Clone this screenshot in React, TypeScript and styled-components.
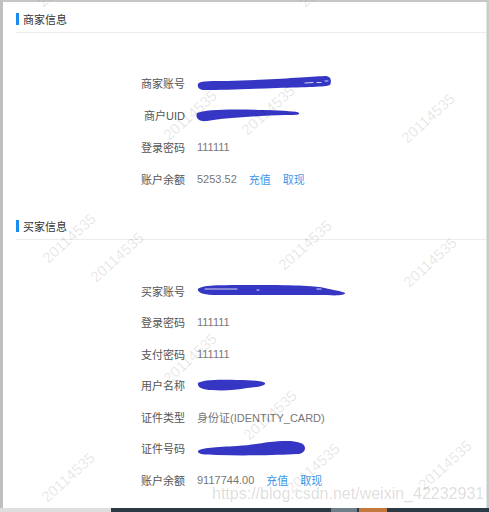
import React from "react";
import styled, { createGlobalStyle } from "styled-components";

const Global = createGlobalStyle`
  html, body { margin: 0; padding: 0; background: #fff; }
  body { font-family: "Liberation Sans", "Noto Sans CJK SC", sans-serif; }
`;

const Screen = styled.div`
  position: relative;
  width: 489px;
  height: 512px;
  overflow: hidden;
  display: flex;
  flex-direction: column;
  background: #c9c9c9;
`;

const Window = styled.div`
  flex: 1;
  min-height: 0;
  display: flex;
  background: #fff;
  border-top: 2px solid #c6c6c6;
  border-left: 3px solid #bfbfbf;
  border-right: 2px solid #cbcbcb;
`;

const Page = styled.main`
  flex: 1;
  display: flex;
  flex-direction: column;
  padding-left: 13px;
  border-right: 1px solid #e3e3e3;
`;

const SectionHeader = styled.header<{ $mt: number }>`
  margin-top: ${(p) => p.$mt}px;
  height: 26px;
  padding-top: 4px;
  display: flex;
  align-items: center;
  gap: 4px;
  border-bottom: 1px solid #ededed;
`;

const Bar = styled.span`
  width: 3px;
  height: 12px;
  background: #1a8cf0;
`;

const Title = styled.h2`
  margin: 0;
  font-size: 11px;
  font-weight: normal;
  color: #333;
`;

const Rows = styled.div<{ $pt: number; $rh: number }>`
  padding-top: ${(p) => p.$pt}px;
  display: grid;
  grid-template-columns: 169px 1fr;
  column-gap: 12px;
  grid-auto-rows: ${(p) => p.$rh}px;
  align-items: center;
`;

const Label = styled.span`
  text-align: right;
  font-size: 11px;
  color: #555;
`;

const Value = styled.span`
  display: flex;
  align-items: center;
  gap: 12px;
  font-size: 11px;
  color: #777;
`;

const Link = styled.a`
  color: #3d97e8;
  text-decoration: none;
  cursor: pointer;
`;

const Scribble = styled.svg<{ $dx: number }>`
  display: block;
  margin-left: ${(p) => p.$dx}px;
`;

const Taskbar = styled.footer`
  height: 4px;
  display: flex;
`;

const TaskSeg = styled.span<{ $w?: number; $c: string }>`
  ${(p) => (p.$w ? `width: ${p.$w}px;` : "flex: 1;")}
  background: ${(p) => p.$c};
`;

const Watermark = styled.span<{ $x: number; $y: number }>`
  position: absolute;
  left: ${(p) => p.$x}px;
  top: ${(p) => p.$y}px;
  font: 15px "Liberation Sans", sans-serif;
  color: rgba(0, 0, 0, 0.11);
  white-space: nowrap;
  pointer-events: none;
  transform: translate(-50%, -50%) rotate(-42deg);
`;

const UrlMark = styled.span`
  position: absolute;
  left: 212px;
  top: 485px;
  font: 16px "Liberation Sans", sans-serif;
  color: rgba(0, 0, 0, 0.15);
  white-space: nowrap;
  pointer-events: none;
`;

const INK = "#3636c4";

type Mark = { w: number; h: number; d: string; dx?: number; cuts?: string };

const Redacted = ({ w, h, d, dx = 0, cuts }: Mark) => (
  <Scribble $dx={dx} width={w} height={h} viewBox={`0 0 ${w} ${h}`}>
    <path d={d} fill={INK} />
    {cuts && <path d={cuts} stroke="#fff" strokeWidth={0.8} fill="none" strokeLinecap="round" />}
  </Scribble>
);

const marks = [
  [190, 115],
  [268, 110],
  [428, 118],
  [64, -18],
  [326, -18],
  [69, 238],
  [117, 257],
  [305, 245],
  [430, 262],
  [190, 358],
  [270, 415],
  [313, 468],
  [68, 477],
  [445, 465],
];

export default function App() {
  return (
    <>
      <Global />
      <Screen>
        <Window>
          <Page>
            <SectionHeader $mt={0}>
              <Bar />
              <Title>商家信息</Title>
            </SectionHeader>
            <Rows $pt={34} $rh={32}>
              <Label>商家账号</Label>
              <Value>
                <Redacted
                  w={136}
                  h={15}
                  d="M1 8 C3 5, 10 5, 30 5 C70 4, 110 1, 128 0 C134 0, 135 5, 133 9 C128 11, 110 11, 80 12 C50 13, 25 14, 8 14 C2 14, 0 11, 1 8 Z"
                  cuts="M108 7 L116 6.5 M120 6.5 L124 6.5 M128 5 L131 5"
                />
              </Value>
              <Label>商户UID</Label>
              <Value>
                <Redacted
                  w={106}
                  h={14}
                  dx={-2}
                  d="M2 5 C10 1, 40 1, 70 2 C90 3, 102 3, 104 5 C105 7, 100 7, 90 7 C60 8, 30 10, 12 13 C4 14, 0 10, 2 5 Z"
                />
              </Value>
              <Label>登录密码</Label>
              <Value>111111</Value>
              <Label>账户余额</Label>
              <Value>
                5253.52
                <Link>充值</Link>
                <Link>取现</Link>
              </Value>
            </Rows>

            <SectionHeader $mt={14}>
              <Bar />
              <Title>买家信息</Title>
            </SectionHeader>
            <Rows $pt={35} $rh={31.5}>
              <Label>买家账号</Label>
              <Value>
                <Redacted
                  w={150}
                  h={15}
                  d="M1 6 C5 2, 20 2, 60 2 C100 2, 120 3, 128 5 C135 7, 145 8, 148 10 C149 12, 140 13, 130 12 C110 12, 60 12, 20 12 C8 12, 0 10, 1 6 Z"
                  cuts="M8 6 L40 6 M60 7 L62 7 M120 6 L124 6"
                />
              </Value>
              <Label>登录密码</Label>
              <Value>111111</Value>
              <Label>支付密码</Label>
              <Value>111111</Value>
              <Label>用户名称</Label>
              <Value>
                <Redacted
                  w={70}
                  h={14}
                  d="M1 5 C5 2, 20 1, 40 2 C55 2, 66 3, 68 5 C69 8, 60 9, 50 10 C40 12, 25 13, 15 12 C5 12, 0 9, 1 5 Z"
                />
              </Value>
              <Label>证件类型</Label>
              <Value>身份证(IDENTITY_CARD)</Value>
              <Label>证件号码</Label>
              <Value>
                <Redacted
                  w={110}
                  h={18}
                  d="M1 12 C3 9, 20 8, 40 7 C60 6, 70 2, 90 2 C100 2, 108 4, 108 9 C108 13, 104 15, 100 15 C80 16, 50 17, 20 16 C6 16, 0 15, 1 12 Z"
                />
              </Value>
              <Label>账户余额</Label>
              <Value>
                9117744.00
                <Link>充值</Link>
                <Link>取现</Link>
              </Value>
            </Rows>
          </Page>
        </Window>
        <Taskbar>
          <TaskSeg $w={111} $c="#dedede" />
          <TaskSeg $w={220} $c="#2b3a44" />
          <TaskSeg $w={26} $c="#6f7f87" />
          <TaskSeg $w={2} $c="#2b3a44" />
          <TaskSeg $w={28} $c="#c47a3e" />
          <TaskSeg $c="#2b3a44" />
        </Taskbar>
        {marks.map(([x, y], i) => (
          <Watermark key={i} $x={x} $y={y}>
            20114535
          </Watermark>
        ))}
        <UrlMark>https://blog.csdn.net/weixin_42232931</UrlMark>
      </Screen>
    </>
  );
}
